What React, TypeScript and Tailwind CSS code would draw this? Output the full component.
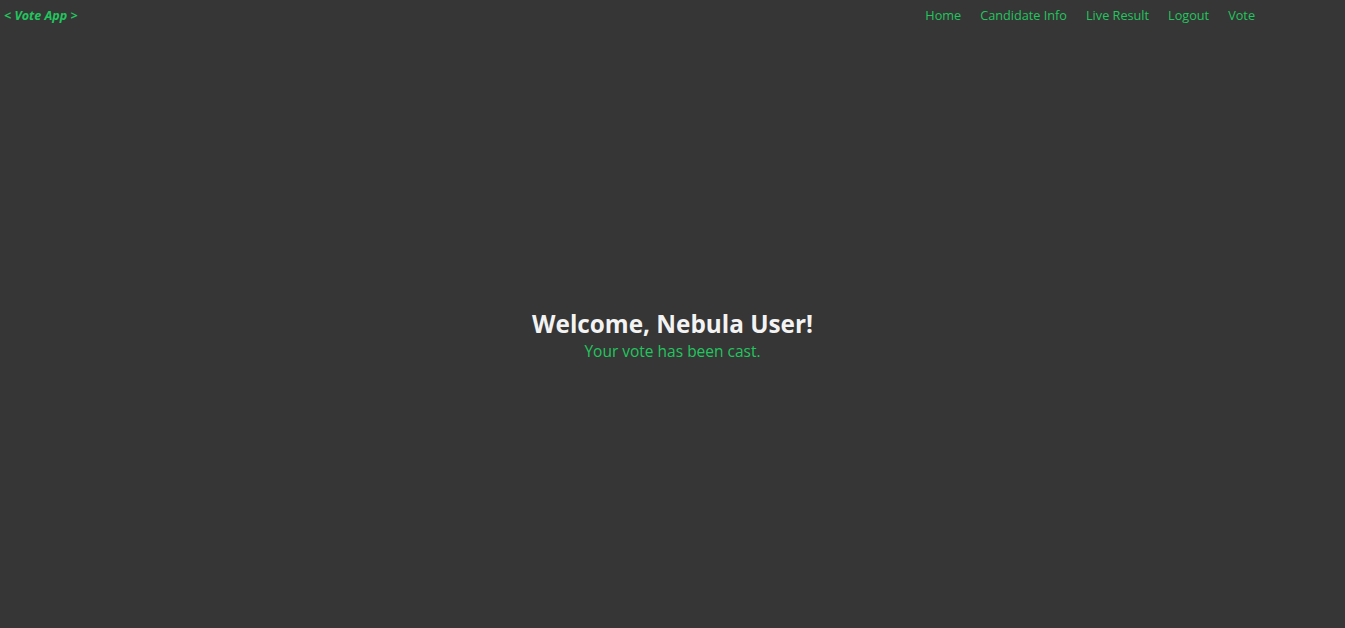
export default function App() {
  const links = ["Home", "Candidate Info", "Live Result", "Logout", "Vote"];
  return (
    <div
      className="h-screen flex flex-col bg-[#363636]"
      style={{ fontFamily: '"Open Sans", "Noto Sans", sans-serif' }}
    >
      <nav className="flex items-baseline justify-between h-[27px] pt-[2px] pl-[4px] pr-[90px]">
        <span className="text-[12.5px] leading-[18px] font-bold italic text-[#22c55e]">
          &lt; Vote App &gt;
        </span>
        <ul className="flex gap-[19px]">
          {links.map((l) => (
            <li key={l}>
              <a href="#" className="text-[12.7px] leading-[18px] text-[#22c55e]">
                {l}
              </a>
            </li>
          ))}
        </ul>
      </nav>
      <main className="flex-1 flex flex-col items-center justify-center pt-[16px]">
        <h1 className="text-[24.3px] leading-[29px] font-bold text-[#f3f3f3]">
          Welcome, Nebula User!
        </h1>
        <p className="text-[15.5px] leading-[22px] mt-[2px] text-[#22c55e]">
          Your vote has been cast.
        </p>
      </main>
    </div>
  );
}
